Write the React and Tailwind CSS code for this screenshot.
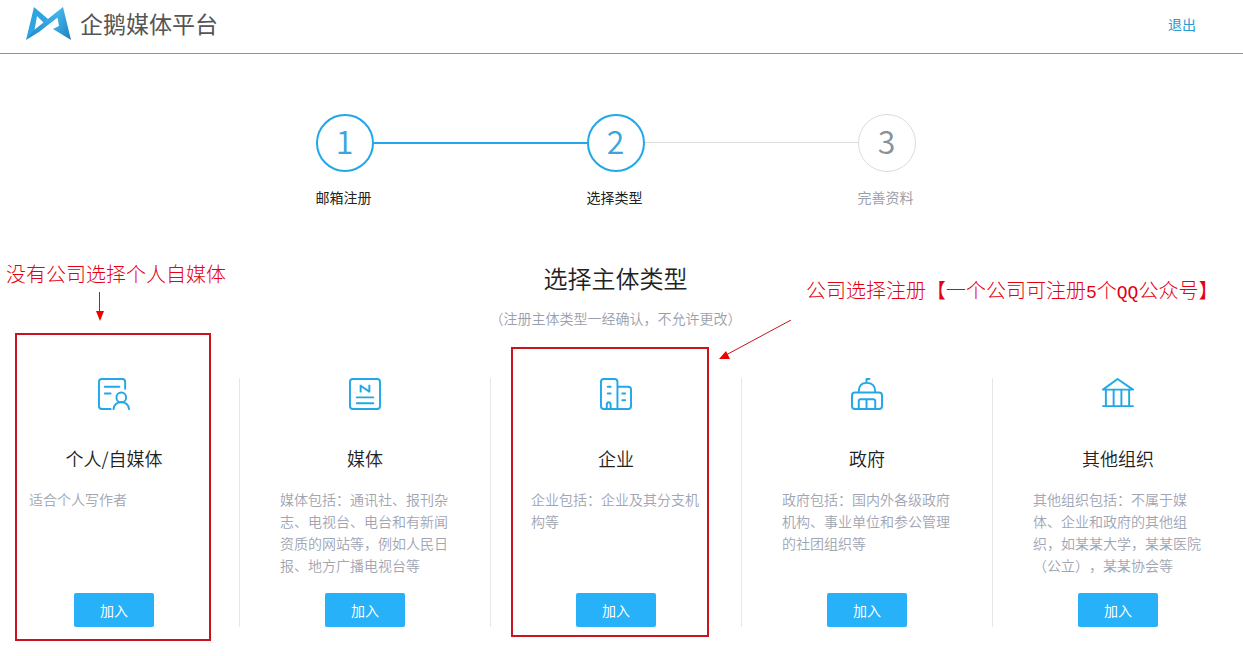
import React from 'react';

const steps = [
  { number: 1, label: '邮箱注册', done: true },
  { number: 2, label: '选择类型', done: true },
  { number: 3, label: '完善资料', done: false },
];

function Logo() {
  return (
    <svg width="46" height="34" viewBox="0 0 46 34" aria-hidden="true">
      <defs>
        <linearGradient id="wing" x1="0" y1="0" x2="1" y2="1">
          <stop offset="0" stopColor="#4cc4f4" />
          <stop offset="1" stopColor="#1c7fc0" />
        </linearGradient>
        <linearGradient id="band" x1="0" y1="1" x2="1" y2="0">
          <stop offset="0" stopColor="#2387c8" />
          <stop offset="1" stopColor="#45bdf0" />
        </linearGradient>
      </defs>
      <path d="M8 0 L22 12 L18 16 L11 9 L8 26 L0 33 Z" fill="#2ea5e0" />
      <path d="M0 33 L8 23 L37 0 L35 9 L31 11 L13 25 Z" fill="url(#band)" />
      <path d="M37 0 L45 33 L27 22 L33 19 L31 8 Z" fill="url(#wing)" />
    </svg>
  );
}

function Icon({ children }) {
  return (
    <svg
      width="32"
      height="32"
      viewBox="0 0 33 33"
      fill="none"
      stroke="#22a7e8"
      strokeWidth="2"
      strokeLinecap="round"
      strokeLinejoin="round"
      aria-hidden="true"
      className="overflow-visible"
    >
      {children}
    </svg>
  );
}

const PersonIcon = () => (
  <Icon>
    <path d="M13 32 H4 Q1 32 1 29 V4 Q1 1 4 1 H25 Q28 1 28 4 V11" />
    <path d="M7 9 H22 M7 16 H13" />
    <circle cx="24" cy="20" r="5" />
    <path d="M16 32 Q17 25 24 25 Q31 25 32 32" />
  </Icon>
);

const MediaIcon = () => (
  <Icon>
    <rect x="1" y="1" width="31" height="31" rx="3" />
    <path d="M12 7 V15 M21 7 V15 M12 8 L21 14" strokeLinecap="butt" />
    <path d="M8 20 H25 M8 26 H25" />
  </Icon>
);

const CompanyIcon = () => (
  <Icon>
    <path d="M18 32 H4 Q1 32 1 29 V4 Q1 1 4 1 H15 Q18 1 18 4 V32 H29 Q32 32 32 29 V12 Q32 9 29 9 H18" />
    <path d="M8 9 H11 M8 16 H11 M23 16 H26 M23 23 H26" />
    <path d="M7 31 V28 Q7 25 9 25 Q11 25 11 28 V31" />
  </Icon>
);

const GovernmentIcon = () => (
  <Icon>
    <rect x="1" y="15" width="31" height="17" rx="3" />
    <path d="M8 14 Q8 5 16 5 Q25 5 25 14 M16 5 V1 H19" />
    <path d="M8 31 V24 Q8 22 10 22 H23 Q25 22 25 24 V31 M16 22 V31" />
  </Icon>
);

const OtherIcon = () => (
  <Icon>
    <path d="M1 12 L16 1 L32 12 Z M1 29 H32" />
    <path d="M4 12 V29 M12 12 V29 M20 12 V29 M28 12 V29" />
  </Icon>
);

const types = [
  { name: '个人/自媒体', icon: PersonIcon, text: '适合个人写作者', note: PersonNote },
  {
    name: '媒体',
    icon: MediaIcon,
    text: '媒体包括：通讯社、报刊杂志、电视台、电台和有新闻资质的网站等，例如人民日报、地方广播电视台等',
  },
  { name: '企业', icon: CompanyIcon, text: '企业包括：企业及其分支机构等', note: CompanyNote },
  {
    name: '政府',
    icon: GovernmentIcon,
    text: '政府包括：国内外各级政府机构、事业单位和参公管理的社团组织等',
  },
  {
    name: '其他组织',
    icon: OtherIcon,
    text: '其他组织包括：不属于媒体、企业和政府的其他组织，如某某大学，某某医院（公立），某某协会等',
  },
];

// red marks that sit on top of the cards
function PersonNote() {
  return (
    <>
      <div className="pointer-events-none absolute -top-[45px] left-[26px] h-[308px] w-[196px] border-2 border-[#c8141e]" />
      <p className="absolute -top-[118px] left-[17px] text-xl font-light whitespace-nowrap text-[#e60012]">
        没有公司选择个人自媒体
      </p>
      <svg className="absolute -top-[86px] left-[106px]" width="10" height="30" viewBox="0 0 10 30" aria-hidden="true">
        <path d="M4.5 0 V20" stroke="#c8141e" />
        <path d="M1 19 H9 L5 29 Z" fill="#f00000" />
      </svg>
    </>
  );
}

function CompanyNote() {
  return (
    <>
      <div className="pointer-events-none absolute -top-[31px] left-[20px] h-[290px] w-[198px] border-2 border-[#c8141e]" />
      <p className="absolute -top-[102px] left-[315px] text-xl font-light whitespace-nowrap text-[#e60012]">
        公司选择注册【一个公司可注册
        <span className="text-lg font-['Liberation_Mono',monospace]">5</span>个
        <span className="text-lg font-['Liberation_Mono',monospace]">QQ</span>公众号】
      </p>
      <svg className="absolute -top-[58px] left-[228px]" width="74" height="40" viewBox="0 0 74 40" aria-hidden="true">
        <path d="M72 0 L7 35" stroke="#c8141e" />
        <path d="M0 39 L7 31 L11 39 Z" fill="#f00000" />
      </svg>
    </>
  );
}

function Steps() {
  return (
    <ol className="mx-auto flex w-[600px] items-start">
      {steps.map((step, i) => (
        <React.Fragment key={step.number}>
          {i > 0 && (
            <li
              aria-hidden="true"
              className={step.done ? 'mt-7 h-0.5 flex-1 bg-[#22a7e8]' : 'mt-7 h-px flex-1 bg-[#dcdcdc]'}
            />
          )}
          <li className="w-[58px]">
            <div
              className={
                step.done
                  ? 'flex h-[58px] items-center justify-center rounded-full border-2 border-[#22a7e8] pb-1.5 text-[32px] font-[350] text-[#3aa5dd]'
                  : 'flex h-[58px] items-center justify-center rounded-full border border-[#dcdcdc] pb-1.5 text-[32px] font-[350] text-[#8a8f99]'
              }
            >
              {step.number}
            </div>
            <p
              className={
                step.done ? 'mt-[15px] text-sm whitespace-nowrap' : 'mt-[15px] text-sm whitespace-nowrap text-[#9a9fac]'
              }
            >
              {step.label}
            </p>
          </li>
        </React.Fragment>
      ))}
    </ol>
  );
}

function TypeCard({ type }) {
  const TypeIcon = type.icon;
  const Note = type.note;
  return (
    <li className="relative flex flex-col items-center border-l border-[#e6e6e6] first:border-transparent">
      <TypeIcon />
      <h3 className="mt-[34px] text-lg font-[350]">{type.name}</h3>
      <p className="mt-4 h-[88px] w-[170px] text-sm leading-[22px] font-[350] text-[#9fa5b3]">{type.text}</p>
      <button type="button" className="mt-[17px] h-[34px] w-20 rounded-xs bg-[#26b1f9] text-sm text-white">
        加入
      </button>
      {Note && <Note />}
    </li>
  );
}

function App() {
  return (
    <div className="overflow-hidden bg-white pb-7 font-['Noto_Sans_CJK_SC',sans-serif] text-[#222] [text-spacing-trim:space-all]">
      <header className="flex h-[54px] items-center justify-between border-b border-[#35b5dc] pr-[47px] pb-1.5 pl-[26px]">
        <h1 className="flex items-center gap-2 text-[23px] text-[#555]">
          <Logo />
          企鹅媒体平台
        </h1>
        <a href="#logout" className="text-sm text-[#2a9bd2]">
          退出
        </a>
      </header>

      <main className="-ml-3 pt-[60px]">
        <Steps />
        <div className="mt-[55px] text-center">
          <h2 className="text-2xl font-[350]">选择主体类型</h2>
          <p className="mt-[14px] text-sm font-[350] text-[#9a9fac]">（注册主体类型一经确认，不允许更改）</p>
        </div>
        <ul className="mt-[50px] grid grid-cols-5">
          {types.map((type) => (
            <TypeCard key={type.name} type={type} />
          ))}
        </ul>
      </main>
    </div>
  );
}

export default App;
